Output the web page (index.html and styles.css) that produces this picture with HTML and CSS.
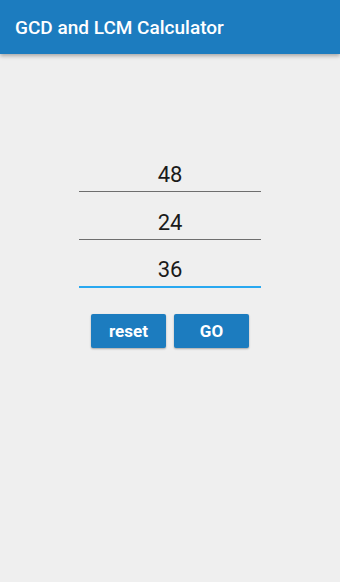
FILE: index.html
```html
<!DOCTYPE html>
<html>
<head>
<meta charset="utf-8">
<link rel="stylesheet" href="styles.css">
</head>
<body>
<header class="appbar"><h1 class="title">GCD and LCM Calculator</h1></header>
<main class="content">
  <div class="form">
    <div class="field"><span class="value">48</span></div>
    <div class="field"><span class="value">24</span></div>
    <div class="field active"><span class="value">36</span></div>
    <div class="buttons">
      <button class="btn">reset</button>
      <button class="btn">GO</button>
    </div>
  </div>
</main>
</body>
</html>
```
FILE: styles.css
```css
html, body {
  margin: 0;
  padding: 0;
  height: 100%;
}
body {
  background: #efefef;
  font-family: Roboto, "Liberation Sans", sans-serif;
}
.appbar {
  height: 54px;
  background: #1c7cbf;
  box-shadow: 0 2px 4px rgba(0,0,0,0.3);
  display: flex;
  align-items: center;
  padding-left: 15px;
  position: relative;
}
.title {
  margin: 0;
  color: #fff;
  font-size: 19px;
  font-weight: 500;
}
.content {
  display: flex;
  justify-content: center;
  padding-top: 100px;
}
.form {
  width: 182px;
  display: flex;
  flex-direction: column;
  align-items: stretch;
}
.field {
  height: 37px;
  border-bottom: 1px solid #6e6e6e;
  display: flex;
  justify-content: center;
  align-items: flex-end;
  margin-bottom: 10px;
}
.field.active {
  border-bottom: 2px solid #29a8f0;
  height: 36px;
}
.value {
  font-size: 22px;
  color: #1a1a1a;
  line-height: 22px;
  padding-bottom: 5px;
}
.buttons {
  display: flex;
  justify-content: center;
  gap: 8px;
  margin-top: 16px;
}
.btn {
  width: 75px;
  height: 34px;
  border: none;
  border-radius: 2px;
  background: #1c7cbf;
  color: #fff;
  font-family: Roboto, "Liberation Sans", sans-serif;
  font-size: 17px;
  font-weight: 700;
  box-shadow: 0 1px 2px rgba(0,0,0,0.3);
  padding: 0;
}
```
